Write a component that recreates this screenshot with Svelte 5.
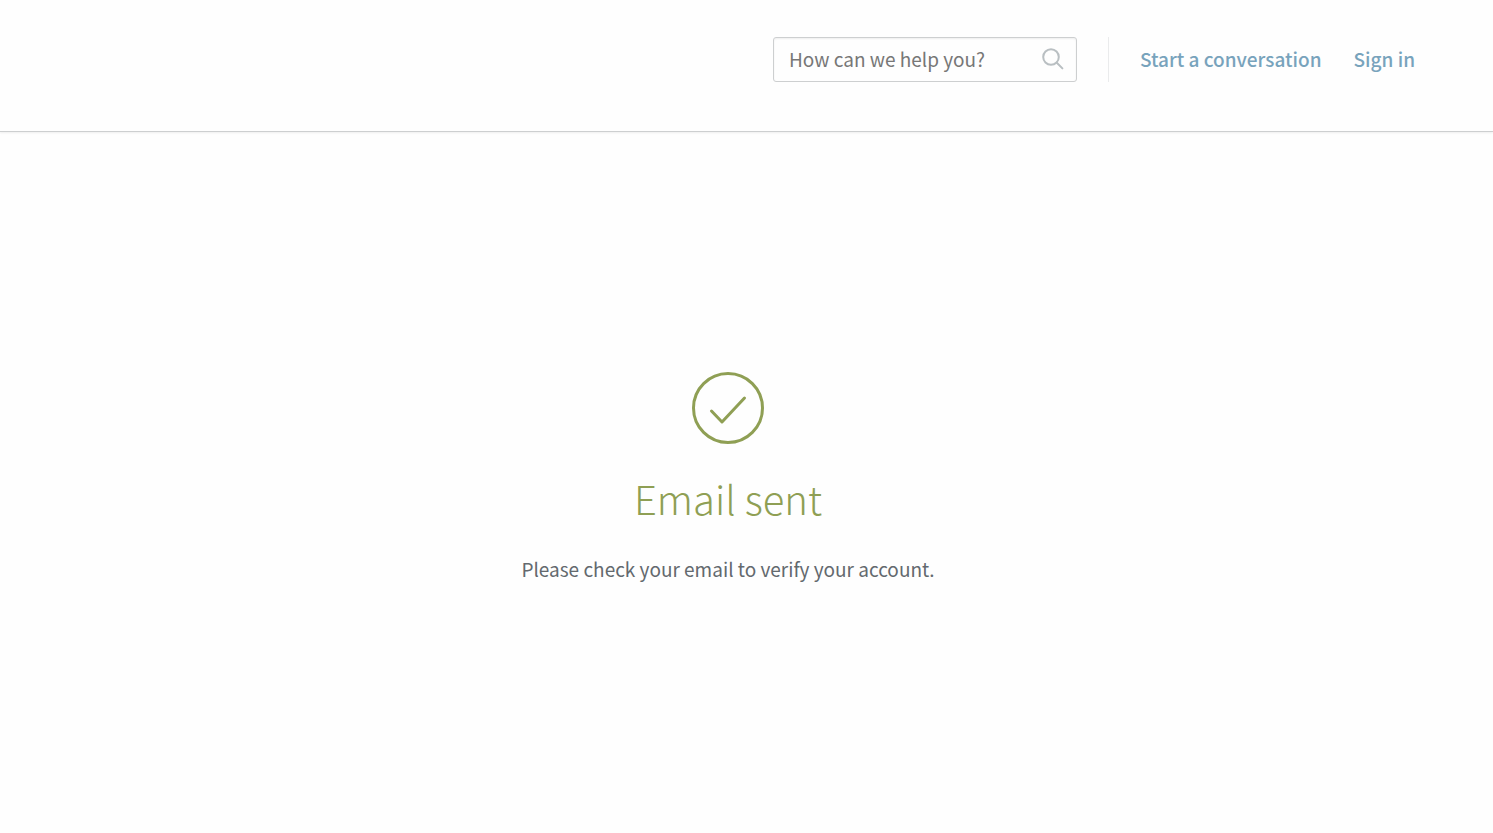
<script>
  const links = [
    { label: "Start a conversation", href: "#conversation" },
    { label: "Sign in", href: "#sign-in" },
  ];

  let query = "";
</script>

<header>
  <form class="search" role="search" on:submit|preventDefault>
    <input
      type="search"
      aria-label="Search"
      placeholder="How can we help you?"
      bind:value={query} />
    <button type="submit" aria-label="Submit search">
      <svg width="22" height="22" viewBox="0 0 22 22">
        <circle cx="9" cy="9" r="7.8" />
        <path d="M14.8 14.8 L20.4 20.4" />
      </svg>
    </button>
  </form>
  <nav>
    {#each links as link}
      <a href={link.href}>{link.label}</a>
    {/each}
  </nav>
</header>

<main>
  <svg class="check" width="72" height="72" viewBox="0 0 72 72" aria-hidden="true">
    <circle cx="36" cy="36" r="34.5" />
    <path d="M19.5 39 L30 50 L52.5 26" />
  </svg>
  <h1>Email sent</h1>
  <p>Please check your email to verify your account.</p>
</main>

<style>
  :global(body) {
    margin: 0;
    background: #fefefe;
    color: #63696e;
    font-family: "Source Sans Pro", "Noto Sans CJK JP", sans-serif;
    font-size: 19px;
    line-height: 30px;
  }

  header {
    display: flex;
    align-items: center;
    justify-content: flex-end;
    box-sizing: border-box;
    padding: 37px 78px 49px 16px;
    border-bottom: 1px solid #cdcfd0;
    box-shadow: 0 1px 2px #eeeeee;
  }

  .search {
    display: flex;
    align-items: center;
    box-sizing: border-box;
    width: 304px;
    height: 45px;
    padding: 0 12px 2px 15px;
    border: 1px solid #cdcfd0;
    border-radius: 3px;
    box-shadow: inset 0 1px 2px #eeeeee;
  }

  .search input {
    flex: 1;
    min-width: 0;
    padding: 0;
    border: 0;
    outline: 0;
    background: none;
    color: #777777;
    font: inherit;
  }

  .search input::placeholder {
    color: #777777;
    opacity: 1;
  }

  .search button {
    display: flex;
    padding: 0;
    border: 0;
    background: none;
    cursor: pointer;
  }

  svg {
    fill: none;
    stroke: #b9bfc2;
    stroke-width: 2;
    stroke-linecap: round;
  }

  nav {
    display: flex;
    align-items: center;
    gap: 32px;
    box-sizing: border-box;
    height: 45px;
    margin-left: 31px;
    padding: 0 0 2px 31px;
    border-left: 1px solid #eaebec;
  }

  nav a {
    color: #78a3bc;
    font-weight: 500;
    text-decoration: none;
  }

  main {
    display: flex;
    flex-direction: column;
    align-items: center;
    padding: 240px 37px 48px 0;
    text-align: center;
  }

  .check {
    stroke: #8f9f54;
    stroke-width: 3;
    stroke-linejoin: round;
  }

  h1 {
    margin: 24px 0 26px;
    color: #8f9f54;
    font-size: 40px;
    font-weight: 300;
    line-height: 60px;
  }

  p {
    margin: 0;
  }
</style>
